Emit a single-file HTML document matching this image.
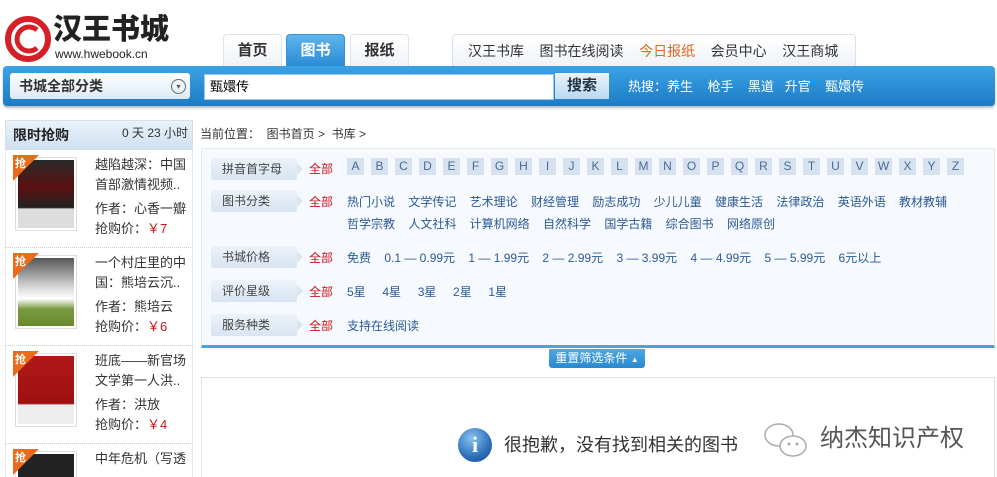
<!DOCTYPE html>
<html><head><meta charset="utf-8"><style>
*{margin:0;padding:0;box-sizing:border-box}
html,body{width:997px;height:477px;overflow:hidden}
body{background:#fff;font-family:"Liberation Sans","Noto Sans CJK SC",sans-serif;font-size:12px;color:#333;position:relative}
.a{position:absolute;white-space:nowrap}
.tab{position:absolute;top:34px;height:33px;width:59px;border:1px solid #dde3ea;border-bottom:none;border-radius:4px 4px 0 0;background:linear-gradient(#fff,#eef2f7);font-size:15px;font-weight:bold;text-align:center;line-height:32px;color:#333}
.lbl{position:absolute;left:211px;width:86px;height:22px;background:linear-gradient(#eef3f9,#d8e4f1);border-radius:2px;line-height:22px;padding-left:11px;font-size:12px;color:#444}
.lbl:after{content:"";position:absolute;right:-6px;top:5px;border-left:6px solid #dce6f2;border-top:6px solid transparent;border-bottom:6px solid transparent}
.red{color:#c8161d}
.ltr{position:absolute;top:158px;width:17px;height:17px;background:#d6e2ef;color:#4a6a9a;text-align:center;line-height:17px;font-size:12px}
.item{position:absolute;left:5px;width:188px;height:98px;border-bottom:1px dotted #ccc;border-left:1px solid #e3e9f0;border-right:1px solid #e3e9f0;background:#fff;overflow:hidden}
.cov{position:absolute;left:9px;top:7px;width:62px;height:74px;border:1px solid #ddd;background:#fff;padding:2px}
.cov div{width:100%;height:100%}
.q{position:absolute;left:7px;top:5px;width:0;height:0;border-top:26px solid #e96c1a;border-right:26px solid transparent}
.q span{position:absolute;left:2px;top:-26px;color:#fff;font-size:11px;font-weight:bold}
.it{position:absolute;left:89px;top:5px;font-size:13px;line-height:20px;color:#333;width:94px;white-space:normal;word-break:break-all}
</style></head><body>
<svg class="a" style="left:4px;top:14px" width="50" height="50" viewBox="0 0 50 50"><circle cx="24" cy="25" r="20" fill="none" stroke="#d61f26" stroke-width="6"/><path d="M33 16 A12 12 0 1 0 33 34" fill="none" stroke="#d61f26" stroke-width="5"/><circle cx="24" cy="25" r="4" fill="#fff"/></svg>
<div class="a" style="left:53px;top:13px;font-size:29px;font-weight:900;color:#222;line-height:34px">汉王书城</div>
<div class="a" style="left:55px;top:47px;font-size:12px;color:#222">www.hwebook.cn</div>
<div class="tab" style="left:223px">首页</div>
<div class="tab" style="left:286px;background:linear-gradient(#5fb4ea,#2a8ad6);color:#fff;border-color:#3a92d6">图书</div>
<div class="tab" style="left:350px">报纸</div>
<div class="a" style="left:452px;top:34px;width:404px;height:33px;border:1px solid #dde3ea;border-bottom:none;border-radius:4px 4px 0 0;background:linear-gradient(#fff,#eef2f7);font-size:14px;line-height:32px;padding-left:15px">汉王书库&nbsp;&nbsp;&nbsp;&nbsp;图书在线阅读&nbsp;&nbsp;&nbsp;&nbsp;<span style="color:#e5661f">今日报纸</span>&nbsp;&nbsp;&nbsp;&nbsp;会员中心&nbsp;&nbsp;&nbsp;&nbsp;汉王商城</div>
<div class="a" style="left:3px;top:66px;width:992px;height:40px;background:linear-gradient(#3aa2e4,#1e7cc6);border-radius:4px;box-shadow:0 2px 2px #bbb"></div>
<div class="a" style="left:10px;top:73px;width:180px;height:26px;background:linear-gradient(#fff,#dde9f6);border-radius:3px;font-size:14px;font-weight:bold;color:#333;line-height:26px;padding-left:9px">书城全部分类</div>
<div class="a" style="left:171px;top:79px;width:15px;height:15px;border:1px solid #667;border-radius:50%;font-size:8px;text-align:center;line-height:13px;color:#555">▾</div>
<div class="a" style="left:204px;top:74px;width:350px;height:26px;background:#fff;border:1px solid #9cc6ea;font-size:13px;line-height:24px;padding-left:5px;color:#000">甄嬛传</div>
<div class="a" style="left:555px;top:73px;width:54px;height:26px;background:linear-gradient(#eaf4fc,#b9d9f3);font-size:15px;font-weight:bold;color:#234;text-align:center;line-height:26px">搜索</div>
<div class="a" style="left:628px;top:78px;font-size:13px;color:#fff;line-height:18px">热搜：养生&nbsp;&nbsp;&nbsp;&nbsp;枪手&nbsp;&nbsp;&nbsp;&nbsp;黑道&nbsp;&nbsp;&nbsp;升官&nbsp;&nbsp;&nbsp;&nbsp;甄嬛传</div>
<div class="a" style="left:5px;top:120px;width:188px;height:30px;background:linear-gradient(#eaf2fa,#cfe0f1);border:1px solid #d5e0ec"></div>
<div class="a" style="left:13px;top:125px;font-size:14px;font-weight:bold;color:#222">限时抢购</div>
<div class="a" style="left:122px;top:124px;font-size:12px;color:#333">0 天 23 小时</div>
<div class="item" style="top:150px"><div class="cov"><div style="background:linear-gradient(#2a2a2a,#5a1010 40%,#222 70%,#ddd 72%)"></div></div><div class="q"><span>抢</span></div><div class="it">越陷越深：中国首部激情视频..<div style="margin-top:4px">作者：心香一瓣<br>抢购价：<span class="red">￥7</span></div></div></div>
<div class="item" style="top:248px"><div class="cov"><div style="background:linear-gradient(#555,#ddd 45%,#fff 60%,#7a9a40 75%,#6a8a30)"></div></div><div class="q"><span>抢</span></div><div class="it">一个村庄里的中国：熊培云沉..<div style="margin-top:4px">作者：熊培云<br>抢购价：<span class="red">￥6</span></div></div></div>
<div class="item" style="top:346px"><div class="cov"><div style="background:linear-gradient(#b01818,#a01010 70%,#eee 72%)"></div></div><div class="q"><span>抢</span></div><div class="it">班底——新官场文学第一人洪..<div style="margin-top:4px">作者：洪放<br>抢购价：<span class="red">￥4</span></div></div></div>
<div class="item" style="top:444px;height:33px;border-bottom:none"><div class="cov"><div style="background:#222"></div></div><div class="q"><span>抢</span></div><div class="it">中年危机（写透</div></div>
<div class="a" style="left:200px;top:125px;font-size:12px;color:#333">当前位置：&nbsp;&nbsp;图书首页 &gt;&nbsp;&nbsp;书库 &gt;</div>
<div class="a" style="left:201px;top:148px;width:794px;height:200px;background:#f6f9fd;border:1px solid #e3e9f0;border-bottom:3px solid #4aa3dc"></div>
<div class="lbl" style="top:158px">拼音首字母</div>
<div class="lbl" style="top:190px">图书分类</div>
<div class="lbl" style="top:246px">书城价格</div>
<div class="lbl" style="top:280px">评价星级</div>
<div class="lbl" style="top:314px">服务种类</div>
<div class="a red" style="left:309px;top:160px">全部</div>
<div class="a red" style="left:309px;top:193px">全部</div>
<div class="a red" style="left:309px;top:249px">全部</div>
<div class="a red" style="left:309px;top:283px">全部</div>
<div class="a red" style="left:309px;top:317px">全部</div>
<div class="ltr" style="left:347px">A</div><div class="ltr" style="left:371px">B</div><div class="ltr" style="left:395px">C</div><div class="ltr" style="left:419px">D</div><div class="ltr" style="left:443px">E</div><div class="ltr" style="left:467px">F</div><div class="ltr" style="left:491px">G</div><div class="ltr" style="left:515px">H</div><div class="ltr" style="left:539px">I</div><div class="ltr" style="left:563px">J</div><div class="ltr" style="left:587px">K</div><div class="ltr" style="left:611px">L</div><div class="ltr" style="left:635px">M</div><div class="ltr" style="left:659px">N</div><div class="ltr" style="left:683px">O</div><div class="ltr" style="left:707px">P</div><div class="ltr" style="left:731px">Q</div><div class="ltr" style="left:755px">R</div><div class="ltr" style="left:779px">S</div><div class="ltr" style="left:803px">T</div><div class="ltr" style="left:827px">U</div><div class="ltr" style="left:851px">V</div><div class="ltr" style="left:875px">W</div><div class="ltr" style="left:899px">X</div><div class="ltr" style="left:923px">Y</div><div class="ltr" style="left:947px">Z</div>
<div class="a" style="left:347px;top:193px;color:#2b5a96">热门小说&nbsp;&nbsp;&nbsp;&nbsp;文学传记&nbsp;&nbsp;&nbsp;&nbsp;艺术理论&nbsp;&nbsp;&nbsp;&nbsp;财经管理&nbsp;&nbsp;&nbsp;&nbsp;励志成功&nbsp;&nbsp;&nbsp;&nbsp;少儿儿童&nbsp;&nbsp;&nbsp;&nbsp;健康生活&nbsp;&nbsp;&nbsp;&nbsp;法律政治&nbsp;&nbsp;&nbsp;&nbsp;英语外语&nbsp;&nbsp;&nbsp;&nbsp;教材教辅</div>
<div class="a" style="left:347px;top:215px;color:#2b5a96">哲学宗教&nbsp;&nbsp;&nbsp;&nbsp;人文社科&nbsp;&nbsp;&nbsp;&nbsp;计算机网络&nbsp;&nbsp;&nbsp;&nbsp;自然科学&nbsp;&nbsp;&nbsp;&nbsp;国学古籍&nbsp;&nbsp;&nbsp;&nbsp;综合图书&nbsp;&nbsp;&nbsp;&nbsp;网络原创</div>
<div class="a" style="left:347px;top:249px;color:#2b5a96">免费&nbsp;&nbsp;&nbsp;&nbsp;0.1 — 0.99元&nbsp;&nbsp;&nbsp;&nbsp;1 — 1.99元&nbsp;&nbsp;&nbsp;&nbsp;2 — 2.99元&nbsp;&nbsp;&nbsp;&nbsp;3 — 3.99元&nbsp;&nbsp;&nbsp;&nbsp;4 — 4.99元&nbsp;&nbsp;&nbsp;&nbsp;5 — 5.99元&nbsp;&nbsp;&nbsp;&nbsp;6元以上</div>
<div class="a" style="left:347px;top:283px;color:#2b5a96">5星&nbsp;&nbsp;&nbsp;&nbsp;&nbsp;4星&nbsp;&nbsp;&nbsp;&nbsp;&nbsp;3星&nbsp;&nbsp;&nbsp;&nbsp;&nbsp;2星&nbsp;&nbsp;&nbsp;&nbsp;&nbsp;1星</div>
<div class="a" style="left:347px;top:317px;color:#2b5a96">支持在线阅读</div>
<div class="a" style="left:549px;top:349px;width:96px;height:19px;background:linear-gradient(#4aa8e4,#2a88d0);border-radius:0 0 3px 3px;color:#fff;font-size:12px;text-align:center;line-height:18px">重置筛选条件 <span style="font-size:8px">▲</span></div>
<div class="a" style="left:201px;top:377px;width:794px;height:100px;border:1px solid #dde3ea;border-bottom:none"></div>
<div class="a" style="left:458px;top:428px;width:34px;height:34px;border-radius:50%;background:radial-gradient(circle at 40% 30%,#8cc3ef,#2a6fb8 60%,#1a4a8a);color:#fff;font-weight:bold;font-size:22px;text-align:center;line-height:34px;font-family:'Liberation Serif',serif">i</div>
<div class="a" style="left:504px;top:431px;font-size:18px;color:#333">很抱歉，没有找到相关的图书</div>
<svg class="a" style="left:762px;top:420px" width="50" height="44" viewBox="0 0 50 44"><ellipse cx="17" cy="15" rx="14" ry="11" fill="#fff" stroke="#aaa" stroke-width="1.5"/><ellipse cx="31" cy="26" rx="13" ry="10" fill="#fff" stroke="#aaa" stroke-width="1.5"/><circle cx="27" cy="24" r="1.5" fill="#aaa"/><circle cx="35" cy="24" r="1.5" fill="#aaa"/></svg>
<div class="a" style="left:820px;top:418px;font-size:24px;color:#555">纳杰知识产权</div>
</body></html>
